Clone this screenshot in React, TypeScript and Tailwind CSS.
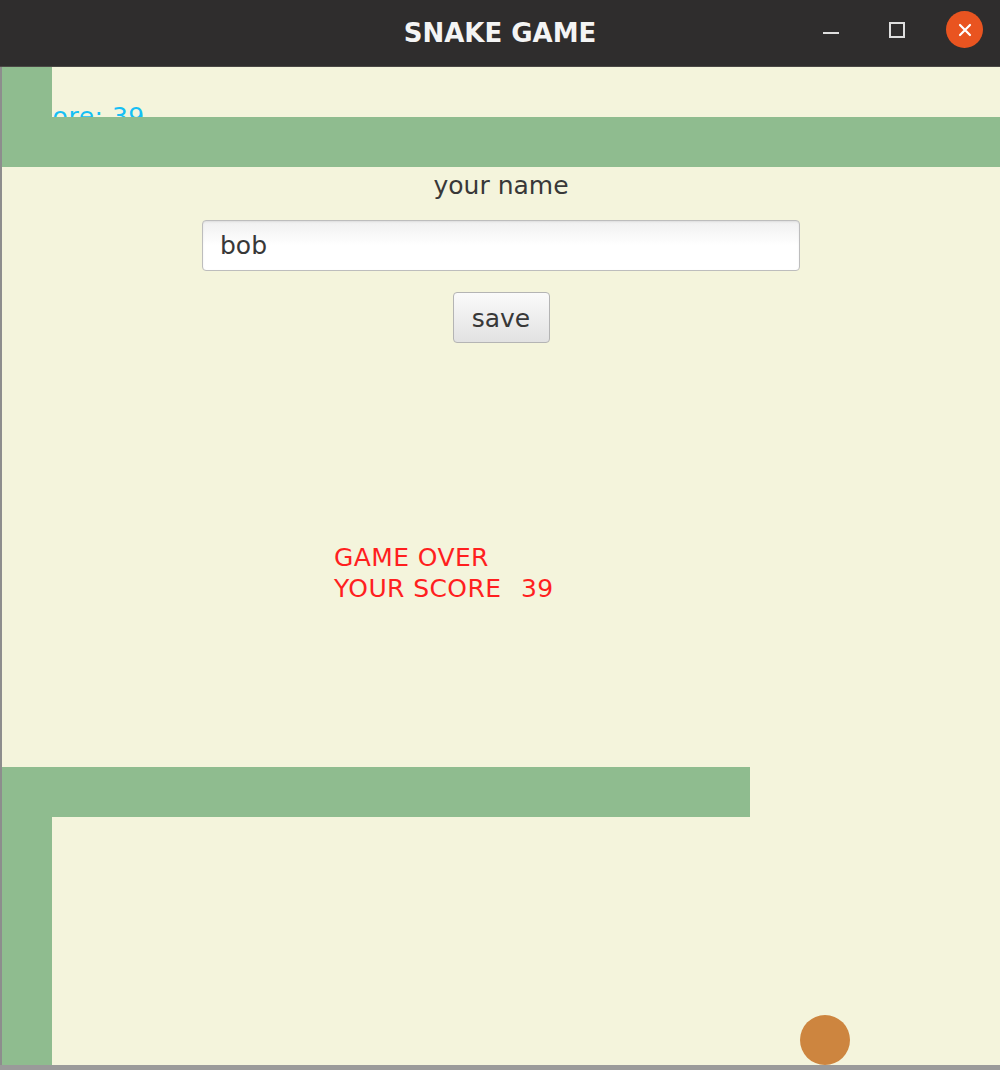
const font = { fontFamily: '"DejaVu Sans", "Liberation Sans", sans-serif' };

function TitleBar() {
  return (
    <div className="relative flex h-[67px] items-center justify-center bg-[#2f2d2d] border-b border-[#4a4845]">
      <span className="text-[26px] font-bold text-[#f4f4f4] leading-none" style={font}>
        SNAKE GAME
      </span>
      <div className="absolute right-[17px] top-[11px] flex items-center">
        {/* minimize */}
        <div className="mr-[50px] mt-[6px] h-[2px] w-[16px] bg-[#dedede]" />
        {/* maximize */}
        <div className="mr-[41px] h-[16px] w-[16px] border-2 border-[#dedede]" />
        {/* close */}
        <div className="flex h-[37px] w-[37px] items-center justify-center rounded-full bg-[#e95420]">
          <svg width="16" height="16" viewBox="0 0 16 16">
            <path d="M3 3 L13 13 M13 3 L3 13" stroke="#fff" strokeWidth="2.2" strokeLinecap="round" />
          </svg>
        </div>
      </div>
    </div>
  );
}

function Board() {
  return (
    <div className="relative h-[998px] overflow-hidden border-l-2 border-[#8d8d8d] bg-[#f4f4dc]" style={font}>
      {/* score, partly under the snake */}
      <div className="absolute left-[20px] top-[34px] text-[25px] leading-[32px] tracking-[0.5px] text-[#16bff5]">Score: 39</div>

      {/* snake */}
      <div className="absolute left-0 top-0 h-[50px] w-[50px] bg-[#8fbc8f]" />
      <div className="absolute left-0 top-[50px] h-[50px] w-[998px] bg-[#8fbc8f]" />
      <div className="absolute left-0 top-[700px] h-[50px] w-[748px] bg-[#8fbc8f]" />
      <div className="absolute left-0 top-[750px] h-[250px] w-[50px] bg-[#8fbc8f]" />

      {/* food */}
      <div className="absolute left-[798px] top-[948px] h-[50px] w-[50px] rounded-full bg-[#cd853f]" />

      {/* game over */}
      <div className="absolute left-[332px] top-[475px] whitespace-pre text-[25px] leading-[31px] tracking-[0.4px] text-[#ff1f1f]">
        {"GAME OVER\nYOUR SCORE  "}
        <span className="ml-[3px]">39</span>
      </div>

      {/* name form */}
      <div className="absolute inset-x-0 top-[103px] flex flex-col items-center text-[#383838]">
        <div className="text-[25px] leading-[32px]">your name</div>
        <div className="mt-[18px] flex h-[51px] w-[598px] items-center rounded-[4px] border border-[#bdbdbd] bg-gradient-to-b from-[#f0f0f0] via-white to-white pl-[17px] text-[25px] shadow-[inset_0_1px_2px_rgba(0,0,0,0.08)]">
          bob
        </div>
        <div className="mt-[21px] flex h-[51px] w-[97px] items-center justify-center rounded-[4px] border border-[#b4b4b4] bg-gradient-to-b from-[#fafafa] to-[#e2e2e2] pt-[2px] text-[25px]">
          save
        </div>
      </div>
    </div>
  );
}

export default function App() {
  return (
    <div className="h-[1070px] w-[1000px] overflow-hidden bg-[#9a9a9a]">
      <TitleBar />
      <Board />
    </div>
  );
}
